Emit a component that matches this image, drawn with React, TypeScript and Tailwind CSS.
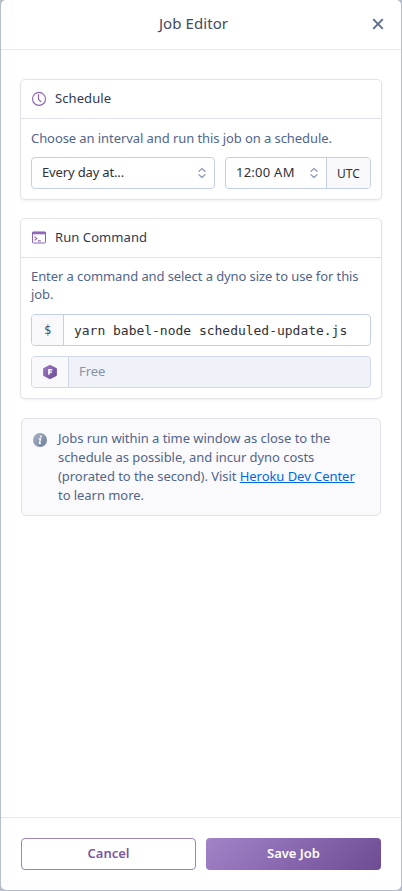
import type { ReactNode } from "react";

function Chevrons() {
  return (
    <svg width="8" height="12" viewBox="0 0 8 12" fill="none" stroke="#8e9fba" strokeWidth="1.3" strokeLinecap="round" strokeLinejoin="round">
      <path d="M1 4.2 4 1.4l3 2.8M1 7.8l3 2.8 3-2.8" />
    </svg>
  );
}

function ClockIcon() {
  return (
    <svg width="16" height="16" viewBox="0 0 16 16" fill="none" stroke="#8a63b2" strokeLinecap="round" strokeLinejoin="round">
      <circle cx="8" cy="7.9" r="6.5" strokeWidth="1.1" />
      <path d="M7.5 3.6v4.7l2.3 2.4" strokeWidth="1.2" />
    </svg>
  );
}

function TerminalIcon() {
  return (
    <svg width="16" height="16" viewBox="0 0 16 16" fill="none" stroke="#8a63b2">
      <rect x="1.5" y="2" width="13" height="11" rx="0.8" />
      <path d="M1.5 2.4h13v1.4h-13z" fill="#9a76c2" />
      <path d="M3.6 6.6 5.8 8.5 3.6 10.4M6.8 10.9h3" strokeWidth="1.1" />
    </svg>
  );
}

function DynoIcon() {
  return (
    <svg width="16" height="16" viewBox="0 0 16 16">
      <defs>
        <linearGradient id="dyno" x1="0" y1="0" x2="1" y2="1">
          <stop stopColor="#9b78c3" />
          <stop offset="1" stopColor="#6e4b97" />
        </linearGradient>
      </defs>
      <path d="M8 1.9 13.9 4.9V11.1L8 14.1 2.1 11.1V4.9z" fill="url(#dyno)" stroke="url(#dyno)" strokeWidth="2" strokeLinejoin="round" />
      <path d="M6.9 10.8V5.8h3.4M6.9 8.3h2.9" fill="none" stroke="#fff" strokeWidth="1.5" />
    </svg>
  );
}

function InfoIcon() {
  return (
    <svg width="14" height="14" viewBox="0 0 14 14">
      <defs>
        <linearGradient id="info" x1="0" y1="0" x2="1" y2="1">
          <stop stopColor="#abb7c9" />
          <stop offset="1" stopColor="#6a7b96" />
        </linearGradient>
      </defs>
      <circle cx="7" cy="7" r="7" fill="url(#info)" />
      <circle cx="7.8" cy="3.5" r="1.1" fill="#fff" />
      <path d="M5.6 5.9h1.9L6.4 10.4h1.5" fill="none" stroke="#fff" strokeWidth="1.3" />
    </svg>
  );
}

function Card({ icon, title, children }: { icon: ReactNode; title: string; children: ReactNode }) {
  return (
    <section className="rounded-[5px] border border-[#e2e4ea] bg-white shadow-[0_1px_2px_rgba(60,70,100,0.08)]">
      <h2 className="flex h-[39px] items-center gap-2 border-b border-[#dfe1ec] pl-[10px] text-[13px] text-[#2f3a50]">
        {icon}
        <span className="tracking-[0.08px]">{title}</span>
      </h2>
      <div className="px-[10px] pt-[9px] pb-[10px]">{children}</div>
    </section>
  );
}

export default function App() {
  return (
    <div className="h-[891px] w-[402px] overflow-hidden bg-[#b7becb] px-px pb-px font-['Noto_Sans','Open_Sans',sans-serif] text-[13px] text-[#52658a]">
      <div className="flex h-full flex-col rounded-[5px] bg-white">
        <header className="grid h-[50px] shrink-0 grid-cols-[40px_1fr_40px] items-center border-b border-[#e8e9ed] pb-[2px]">
          <span />
          <h1 className="pr-[15px] text-center text-[15px] tracking-[0.08px] text-[#3f4a61]">Job Editor</h1>
          <button aria-label="Close" className="flex pl-[11px]">
            <svg width="12" height="12" viewBox="0 0 12 12" stroke="#596d8c" strokeWidth="1.9">
              <path d="m1.2 1.2 9.6 9.6M10.8 1.2 1.2 10.8" />
            </svg>
          </button>
        </header>

        <main className="flex flex-1 flex-col gap-[18px] px-[19px] pt-[29px]">
          <Card icon={<ClockIcon />} title="Schedule">
            <p className="pt-px leading-[18px] tracking-[-0.08px]">Choose an interval and run this job on a schedule.</p>
            <div className="mt-[10px] flex gap-[10px] text-[#2f3136]">
              <div className="flex h-8 w-[184px] items-center justify-between rounded-[4px] border border-[#c5cfe3] pr-2 pl-[10px]">
                <span className="tracking-[-0.15px]">Every day at...</span>
                <Chevrons />
              </div>
              <div className="flex h-8 flex-1 overflow-hidden rounded-[4px] border border-[#c5cfe3]">
                <div className="flex flex-1 items-center justify-between pr-2 pl-[10px]">
                  <span className="tracking-[0.25px]">12:00 AM</span>
                  <Chevrons />
                </div>
                <div className="flex w-[44px] items-center justify-center border-l border-[#c5cfe3] bg-[#f9f9fc] pt-[2px] text-[12px] tracking-[0.1px]">UTC</div>
              </div>
            </div>
          </Card>

          <Card icon={<TerminalIcon />} title="Run Command">
            <p className="leading-[18px] tracking-[-0.09px]">Enter a command and select a dyno size to use for this job.</p>
            <div className="mt-[11px] flex h-8 overflow-hidden rounded-[4px] border border-[#c5cfe3] font-['DejaVu_Sans_Mono',monospace] text-[#2f3136]">
              <div className="flex w-8 items-center justify-center border-r border-[#c5cfe3] bg-[#f9f9fc] text-[12px] text-[#3f4a61]">$</div>
              <div className="flex items-center pt-px pl-[10px] tracking-[-0.02px]">yarn babel-node scheduled-update.js</div>
            </div>
            <div className="mt-[10px] flex h-8 overflow-hidden rounded-[4px] border border-[#d2d9e8] bg-[#eff2f8]">
              <div className="flex w-[37px] items-center justify-center border-r border-[#cfd7e6] bg-[#f9f9fc]">
                <DynoIcon />
              </div>
              <div className="flex items-center pl-[10px] tracking-[-0.1px] text-[#8592aa]">Free</div>
            </div>
          </Card>

          <aside className="mx-px mt-px flex h-[98px] gap-[11px] rounded-[5px] border border-[#dfe1ec] bg-[#fafafc] pt-[10px] pl-[11px]">
            <span className="mt-[4px] shrink-0"><InfoIcon /></span>
            <p className="leading-[19px] tracking-[-0.05px] whitespace-nowrap">
              Jobs run within a time window as close to the<br />
              schedule as possible, and incur dyno costs<br />
              (prorated to the second). Visit{" "}
              <a className="text-[#0068e8] underline" href="#">Heroku Dev Center</a><br />
              to learn more.
            </p>
          </aside>
        </main>

        <footer className="flex h-[73px] shrink-0 gap-[10px] border-t border-[#e6e8ec] px-5 pt-5 font-semibold">
          <button className="h-8 w-[175px] rounded-[4px] border border-[#9d83bb] text-[#79589f]">Cancel</button>
          <button className="h-8 w-[175px] rounded-[4px] bg-linear-[135deg,#a283c8,#6e4c94] text-white">Save Job</button>
        </footer>
      </div>
    </div>
  );
}
